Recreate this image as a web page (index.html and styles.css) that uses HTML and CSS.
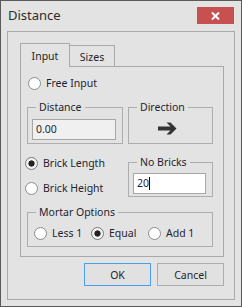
FILE: index.html
```html
<!DOCTYPE html>
<html lang="en">
<head>
  <meta charset="UTF-8" />
  <title>Distance</title>
  <link rel="stylesheet" href="styles.css">
</head>
<body>
  <div class="window">
    <div class="titlebar">
      <div class="title">Distance</div>
      <div class="close">
        <svg width="9" height="8" viewBox="0 0 9 8">
          <path d="M1 0.5L8 7.5M8 0.5L1 7.5" stroke="#fff" stroke-width="2" fill="none"/>
        </svg>
      </div>
    </div>

    <div class="frame">
      <div class="tabs">
        <div class="tab active">Input</div>
        <div class="tab">Sizes</div>
      </div>

      <div class="panel">
        <label class="option free"><input type="radio" name="mode"> Free Input</label>

        <div class="row">
          <fieldset class="group distance">
            <legend>Distance</legend>
            <div class="group-body"><div class="textbox disabled">0.00</div></div>
          </fieldset>
          <fieldset class="group direction">
            <legend>Direction</legend>
            <div class="group-body arrow-body">
              <svg width="19" height="13" viewBox="0 0 19 13">
                <path d="M0 4.5H12.5L8.5 0.5H12.5L18.5 6.5L12.5 12.5H8.5L12.5 8.5H0Z" fill="#333"/>
              </svg>
            </div>
          </fieldset>
        </div>

        <div class="row bricks">
          <div class="brick-options">
            <label class="option"><input type="radio" name="mode" checked> Brick Length</label>
            <label class="option"><input type="radio" name="mode"> Brick Height</label>
          </div>
          <fieldset class="group count">
            <legend>No Bricks</legend>
            <div class="group-body"><div class="textbox">20<span class="caret"></span></div></div>
          </fieldset>
        </div>

        <fieldset class="group mortar">
          <legend>Mortar Options</legend>
          <div class="group-body mortar-body">
            <label class="option"><input type="radio" name="mortar"> Less 1</label>
            <label class="option"><input type="radio" name="mortar" checked> Equal</label>
            <label class="option"><input type="radio" name="mortar"> Add 1</label>
          </div>
        </fieldset>
      </div>

      <div class="buttons">
        <button class="btn default">OK</button>
        <button class="btn">Cancel</button>
      </div>
    </div>
  </div>
</body>
</html>
```

FILE: styles.css
```css
* {
  box-sizing: border-box;
}

body {
  margin: 0;
  font-family: "Noto Sans", sans-serif;
  font-size: 10.5px;
  color: #1f1f2e;
  background-color: #e3e3e3;
}

.window {
  width: 242px;
  height: 307px;
  border: 1px solid #5a5a5a;
  background-color: #e3e3e3;
}

.titlebar {
  display: flex;
  justify-content: space-between;
  align-items: flex-start;
  height: 30px;
  padding: 5px 7px 0 7px;
}

.title {
  font-size: 13px;
  line-height: 18px;
  color: #2b2b2b;
}

.close {
  width: 37px;
  height: 17px;
  margin-top: 1px;
  background-color: #c75050;
  display: flex;
  align-items: center;
  justify-content: center;
}

.frame {
  margin-left: 6px;
  width: 228px;
  height: 269px;
  border: 1px solid #a9a9a9;
  padding: 11px 0 0 12px;
}

.tabs {
  display: flex;
  align-items: flex-end;
  height: 23px;
  position: relative;
  z-index: 1;
}

.tab {
  display: flex;
  align-items: center;
  justify-content: center;
  border: 1px solid #a9a9a9;
  border-bottom: none;
  background-color: #e3e3e3;
  line-height: 14px;
}

.tab.active {
  width: 50px;
  height: 24px;
  margin-bottom: -1px;
}

.tab + .tab {
  margin-left: -1px;
  width: 46px;
  height: 21px;
  padding-top: 1px;
}

.panel {
  width: 204px;
  height: 191px;
  border: 1px solid #a9a9a9;
  padding-left: 6px;
}

.option {
  display: flex;
  align-items: center;
  gap: 5px;
  height: 13px;
  line-height: 13px;
  white-space: nowrap;
}

.option input {
  appearance: none;
  margin: 0;
  width: 13px;
  height: 13px;
  flex: none;
  border: 1px solid #8c8c8c;
  border-radius: 50%;
  background-color: #fff;
}

.option input:checked {
  background: radial-gradient(circle, #222 0, #222 2.8px, #f2f2f2 3.4px);
  border-color: #7a7a7a;
}

.free {
  margin-top: 10px;
  margin-left: 1px;
}

.row {
  display: flex;
  gap: 5px;
  margin-top: 10px;
}

.group {
  margin: 0;
  padding: 0;
  min-inline-size: 0;
  border: 1px solid #adadad;
}

.group legend {
  margin-left: 8px;
  padding: 0 3px;
  line-height: 14px;
}

.group-body {
  padding: 5px 4px 0 4px;
}

.distance {
  width: 96px;
  height: 44px;
}

.direction {
  width: 85px;
  height: 44px;
}

.arrow-body {
  display: flex;
  align-items: center;
  justify-content: center;
  height: 28px;
  padding: 0 6px 0 0;
}

.textbox {
  width: 84px;
  height: 21px;
  border: 1px solid #a6a6a6;
  background-color: #fff;
  padding: 0 3px;
  line-height: 19px;
  display: flex;
  align-items: center;
}

.textbox.disabled {
  background-color: #f0f0f0;
}

.caret {
  width: 1px;
  height: 13px;
  background-color: #000;
}

.bricks {
  margin-top: 11px;
  gap: 0;
}

.brick-options {
  width: 103px;
  margin-left: -2px;
  padding-top: 2px;
  display: flex;
  flex-direction: column;
  gap: 12px;
}

.count {
  width: 85px;
  height: 42px;
}

.count .group-body {
  padding-top: 4px;
}

.count .textbox {
  width: 73px;
}

.mortar {
  margin-top: 8px;
  width: 186px;
  height: 42px;
}

.mortar-body {
  display: flex;
  padding: 8px 6px 0 6px;
}

.mortar-body .option {
  width: 57px;
}

.buttons {
  display: flex;
  justify-content: flex-end;
  gap: 6px;
  width: 204px;
  margin-top: 6px;
}

.btn {
  width: 67px;
  height: 23px;
  border: 1px solid #adadad;
  background-color: #e1e1e1;
  font-family: "Noto Sans", sans-serif;
  font-size: 10.5px;
  color: #1f1f2e;
  padding: 0;
}

.btn.default {
  border-color: #4a9ff0;
}
```
